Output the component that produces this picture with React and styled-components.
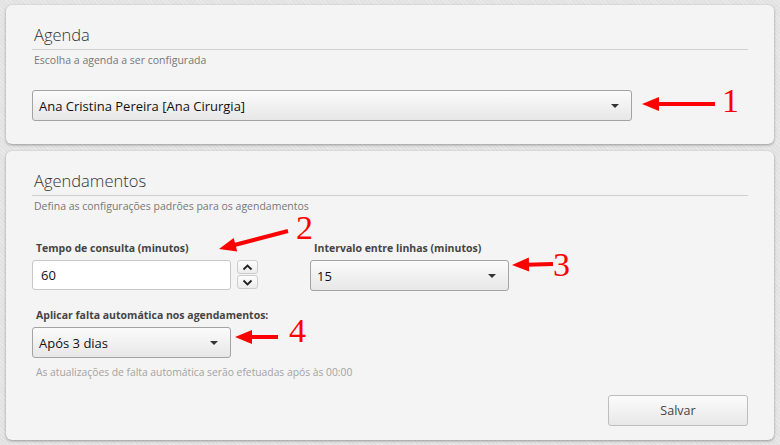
import React from 'react';
import styled, { createGlobalStyle } from 'styled-components';

const GlobalStyle = createGlobalStyle`
  html, body {
    margin: 0;
    padding: 0;
    background: #e4e4e4;
  }
  body {
    font-family: 'Open Sans', 'Liberation Sans', sans-serif;
    color: #222;
  }
`;

const Page = styled.div`
  position: relative;
  width: 780px;
  height: 445px;
  box-sizing: border-box;
  padding: 5px 6px 0 6px;
  display: flex;
  flex-direction: column;
  gap: 7px;
  background:
    repeating-linear-gradient(45deg, rgba(255,255,255,0.25) 0 1px, transparent 1px 3px),
    #e2e2e2;
  overflow: hidden;
`;

const Card = styled.section`
  background: #f4f4f4;
  border-radius: 6px;
  box-shadow: 0 1px 3px rgba(0, 0, 0, 0.35);
  height: ${(p) => p.$height}px;
  box-sizing: border-box;
  padding: 19px 26px 0 26px;
  display: flex;
  flex-direction: column;
`;

const Title = styled.h2`
  margin: 0;
  padding: 0 0 3px 2px;
  font-size: 16.5px;
  line-height: 22px;
  font-weight: 300;
  color: #333;
  border-bottom: 1px solid #cfcfcf;
`;

const Subtitle = styled.p`
  margin: 3px 0 0 2px;
  font-size: 10.5px;
  line-height: 14px;
  color: #777;
`;

const Select = styled.div`
  box-sizing: border-box;
  width: ${(p) => p.$width}px;
  height: 31px;
  border: 1px solid #a3a3a3;
  border-radius: 3px;
  background: linear-gradient(#fbfbfb, #e7e7e7);
  display: flex;
  align-items: center;
  justify-content: space-between;
  padding: 0 12px 0 6px;
  font-size: 13px;
  color: #111;
  margin-top: ${(p) => p.$top || 0}px;

  &::after {
    content: '';
    border-left: 4px solid transparent;
    border-right: 4px solid transparent;
    border-top: 4px solid #333;
  }
`;

const FieldGrid = styled.div`
  margin-top: 28px;
  display: grid;
  grid-template-columns: 226px 199px;
  column-gap: 52px;
  row-gap: 17px;
`;

const Field = styled.div`
  display: flex;
  flex-direction: column;
`;

const Label = styled.label`
  font-size: 10.5px;
  font-weight: 700;
  color: #444;
  line-height: 14px;
  white-space: nowrap;
  margin: 0 0 5px 4px;
`;

const NumberRow = styled.div`
  display: flex;
  gap: 6px;
`;

const NumberInput = styled.div`
  box-sizing: border-box;
  width: 199px;
  height: 30px;
  background: #fff;
  border: 1px solid #c8c8c8;
  border-radius: 3px;
  display: flex;
  align-items: center;
  padding-left: 8px;
  font-size: 13px;
  color: #111;
`;

const Spinner = styled.div`
  display: flex;
  flex-direction: column;
  gap: 1px;
`;

const SpinButton = styled.button`
  box-sizing: border-box;
  width: 21px;
  height: 14px;
  padding: 0;
  border: 1px solid #cdcdcd;
  border-radius: 3px;
  background: linear-gradient(#fdfdfd, #ececec);
  display: flex;
  align-items: center;
  justify-content: center;
`;

const Hint = styled.p`
  margin: 7px 0 0 4px;
  font-size: 10.3px;
  line-height: 14px;
  color: #a3a3a3;
`;

const Footer = styled.div`
  display: flex;
  justify-content: flex-end;
  margin-top: 16px;
`;

const Button = styled.button`
  width: 140px;
  height: 31px;
  border: 1px solid #bdbdbd;
  border-radius: 3px;
  background: linear-gradient(#fbfbfb, #e8e8e8);
  font-family: inherit;
  font-size: 12.5px;
  color: #444;
`;

const Annotations = styled.svg`
  position: absolute;
  left: 0;
  top: 0;
  pointer-events: none;
`;

const Num = styled.span`
  position: absolute;
  left: ${(p) => p.$x}px;
  top: ${(p) => p.$y}px;
  font-family: 'Liberation Serif', serif;
  font-size: 34px;
  line-height: 24px;
  color: #f00;
`;

const Chevron = ({ up }) => (
  <svg width="11" height="7" viewBox="0 0 11 7">
    <path d={up ? 'M1.5 5.5 L5.5 1.5 L9.5 5.5' : 'M1.5 1.5 L5.5 5.5 L9.5 1.5'} fill="none" stroke="#222" strokeWidth="1.8" />
  </svg>
);

const arrows = [
  { x1: 715, y1: 104, x2: 642, y2: 104 },
  { x1: 288, y1: 231, x2: 219, y2: 249 },
  { x1: 553, y1: 264, x2: 512, y2: 265 },
  { x1: 278, y1: 337, x2: 235, y2: 337 },
];

function Arrow({ x1, y1, x2, y2 }) {
  const dx = x2 - x1;
  const dy = y2 - y1;
  const len = Math.hypot(dx, dy);
  const ux = dx / len;
  const uy = dy / len;
  const head = 17;
  const half = 7;
  const bx = x2 - ux * head;
  const by = y2 - uy * head;
  const pts = `${x2},${y2} ${bx - uy * half},${by + ux * half} ${bx + uy * half},${by - ux * half}`;
  return (
    <g>
      <line x1={x1} y1={y1} x2={bx + ux * 2} y2={by + uy * 2} stroke="#f00" strokeWidth="4" />
      <polygon points={pts} fill="#f00" />
    </g>
  );
}

export default function App() {
  return (
    <>
      <GlobalStyle />
      <Page>
        <Card $height={139}>
          <Title>Agenda</Title>
          <Subtitle>Escolha a agenda a ser configurada</Subtitle>
          <Select $width={600} $top={23}>Ana Cristina Pereira [Ana Cirurgia]</Select>
        </Card>
        <Card $height={289}>
          <Title>Agendamentos</Title>
          <Subtitle>Defina as configurações padrões para os agendamentos</Subtitle>
          <FieldGrid>
            <Field>
              <Label>Tempo de consulta (minutos)</Label>
              <NumberRow>
                <NumberInput>60</NumberInput>
                <Spinner>
                  <SpinButton><Chevron up /></SpinButton>
                  <SpinButton><Chevron /></SpinButton>
                </Spinner>
              </NumberRow>
            </Field>
            <Field>
              <Label>Intervalo entre linhas (minutos)</Label>
              <Select $width={199}>15</Select>
            </Field>
            <Field>
              <Label>Aplicar falta automática nos agendamentos:</Label>
              <Select $width={199}>Após 3 dias</Select>
            </Field>
          </FieldGrid>
          <Hint>As atualizações de falta automática serão efetuadas após às 00:00</Hint>
          <Footer>
            <Button>Salvar</Button>
          </Footer>
        </Card>
        <Annotations width="780" height="445">
          {arrows.map((a, i) => <Arrow key={i} {...a} />)}
        </Annotations>
        <Num $x={722} $y={89}>1</Num>
        <Num $x={296} $y={216}>2</Num>
        <Num $x={553} $y={253}>3</Num>
        <Num $x={289} $y={319}>4</Num>
      </Page>
    </>
  );
}
